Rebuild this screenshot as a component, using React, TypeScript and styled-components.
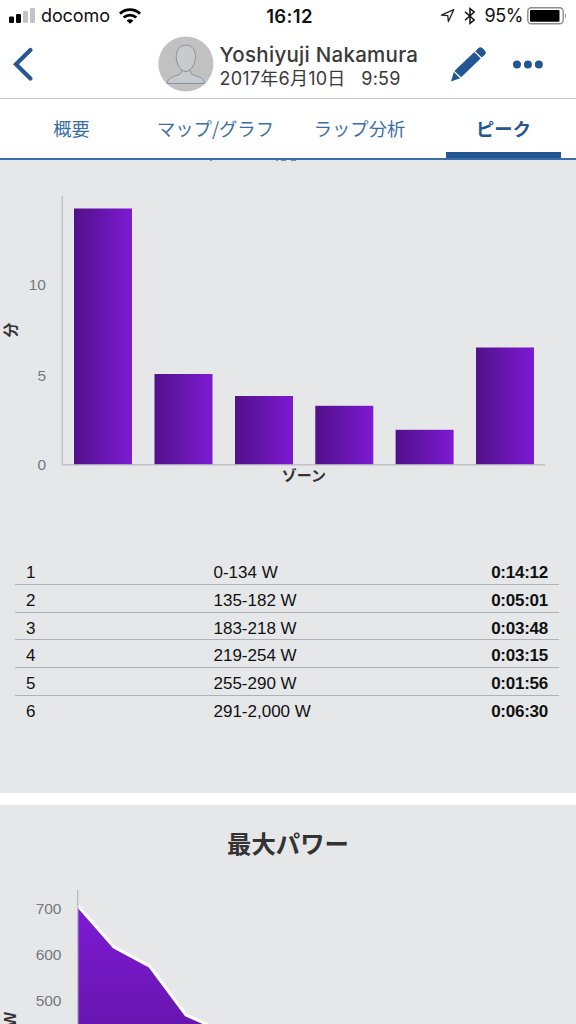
import React from "react";
import styled, { createGlobalStyle } from "styled-components";

const sans = `"Liberation Sans", "Noto Sans CJK JP", sans-serif`;
const ui = `Inter, "Noto Sans CJK JP", sans-serif`;

const GlobalStyle = createGlobalStyle`
  * { box-sizing: border-box; }
  body { margin: 0; background: #fff; overflow: hidden; }
`;

const Screen = styled.div`
  width: 576px;
  height: 1024px;
  overflow: hidden;
  display: flex;
  flex-direction: column;
  background: #fff;
  font-family: ${sans};
`;

const StatusBar = styled.div`
  height: 32px;
  flex: none;
  display: grid;
  grid-template-columns: 1fr auto 1fr;
  align-items: center;
  padding: 0 8px 0 9px;
  font-family: ${ui};
  font-size: 18px;
  line-height: 32px;
  color: #111;
`;

const StatusGroup = styled.div<{ $end?: boolean }>`
  display: flex;
  align-items: center;
  justify-content: ${(p) => (p.$end ? "flex-end" : "flex-start")};
`;

const Carrier = styled.span`
  margin: 0 9px 0 5px;
  letter-spacing: -0.1px;
`;

const Clock = styled.span`
  padding-left: 2px;
  font-size: 18.5px;
  font-weight: 600;
  letter-spacing: 0.35px;
`;

const BluetoothIcon = styled.svg`
  margin-left: 9px;
`;

const BatteryText = styled.span`
  margin: 0 4px 0 8px;
  letter-spacing: -0.4px;
`;

const Header = styled.header`
  height: 67px;
  flex: none;
  display: flex;
  align-items: center;
  border-bottom: 1px solid #c8c8c8;
  padding: 0 32px 2px 12px;
`;

const BackIcon = styled.svg`
  margin-right: 124px;
`;

const Person = styled.div`
  width: 231px;
  margin-left: 6px;
  padding-top: 6px;
  font-family: ${ui};
  color: #3a3a3a;
  white-space: pre;
`;

const Name = styled.div`
  font-size: 20.5px;
  line-height: 24px;
  font-weight: 500;
  letter-spacing: 0.28px;
`;

const DateLine = styled.div`
  font-size: 18px;
  line-height: 24px;
  letter-spacing: 0.22px;
`;

const PencilIcon = styled.svg`
  margin: 0 25px 0 2px;
`;

const Tabs = styled.nav`
  height: 61px;
  flex: none;
  display: flex;
  border-bottom: 2px solid #3a6ea8;
`;

const Tab = styled.div<{ $active?: boolean }>`
  width: 144px;
  padding: 16px 1px 0 0;
  font-size: 18.3px;
  line-height: 27px;
  font-family: "Noto Sans CJK JP", sans-serif;
  font-weight: ${(p) => (p.$active ? 700 : 400)};
  color: ${(p) => (p.$active ? "#235693" : "#3b6ea6")};
  display: flex;
  flex-direction: column;
  justify-content: space-between;
  align-items: center;
`;

const Indicator = styled.div`
  width: 115px;
  height: 6px;
  background: #235693;
`;

const Panel = styled.section<{ $height: number }>`
  height: ${(p) => p.$height}px;
  flex: none;
  overflow: hidden;
  background: #e6e7e9;
  font-family: ${sans};
`;

const Divider = styled.div`
  height: 12px;
  flex: none;
  background: #fff;
`;

const Chart = styled.svg`
  display: block;
  font-family: ${sans};
`;

const ZoneTable = styled.div`
  margin: 57.4px 17px 0 15px;
`;

const ZoneRow = styled.div`
  height: 27.7px;
  display: grid;
  grid-template-columns: 187.5px 1fr auto;
  padding: 5.8px 11px 0;
  font-size: 17px;
  line-height: 20px;
  color: #111;
  border-bottom: 1px solid #b0b1b4;
  &:last-child { border-bottom: none; }
`;

const ZoneTime = styled.span`
  font-weight: 700;
  letter-spacing: -0.25px;
`;

const PanelTitle = styled.h2`
  margin: 0;
  padding-top: 20px;
  text-align: center;
  font-family: "Noto Sans CJK JP", sans-serif;
  font-size: 24.4px;
  line-height: 36px;
  font-weight: 700;
  color: #333;
`;

const bars = [
  { x: 74, top: 208.5 },
  { x: 154.5, top: 374 },
  { x: 235, top: 396 },
  { x: 315.3, top: 405.8 },
  { x: 395.6, top: 429.8 },
  { x: 476, top: 347.5 },
];

const zones = [
  ["1", "0-134 W", "0:14:12"],
  ["2", "135-182 W", "0:05:01"],
  ["3", "183-218 W", "0:03:48"],
  ["4", "219-254 W", "0:03:15"],
  ["5", "255-290 W", "0:01:56"],
  ["6", "291-2,000 W", "0:06:30"],
];

const tabs = ["概要", "マップ/グラフ", "ラップ分析", "ピーク"];

function ZoneChart() {
  return (
    <Chart width="576" height="340" viewBox="0 160 576 340">
      <defs>
        <linearGradient id="bar" x1="0" x2="1" y1="0" y2="0">
          <stop offset="0" stopColor="#511189" />
          <stop offset="1" stopColor="#7d1ad3" />
        </linearGradient>
      </defs>
      {/* lower edge of the heading that has scrolled under the tabs */}
      <path d="M210 160.3h2M276 160.3h2M281 160.3h5M291 160.3h5" stroke="#55585e" strokeWidth="0.8" />
      <path d="M62.3 196V464.7H545" fill="none" stroke="#c1c2c5" strokeWidth="1.4" />
      {bars.map((b) => (
        <rect key={b.x} x={b.x} y={b.top} width="58" height={464.2 - b.top} fill="url(#bar)" />
      ))}
      <g fill="#77787b" fontSize="15.5" textAnchor="end">
        <text x="46" y="290">10</text>
        <text x="46" y="381">5</text>
        <text x="46" y="470">0</text>
      </g>
      <g fill="#333" fontSize="15" fontWeight="700" textAnchor="middle" fontFamily="Noto Sans CJK JP, sans-serif">
        <text x="304" y="481">ゾーン</text>
        <text transform="translate(15.5 330) rotate(-90)">分</text>
      </g>
    </Chart>
  );
}

function PowerChart() {
  return (
    <Chart width="576" height="163" viewBox="0 861 576 163">
      <defs>
        <linearGradient id="area" gradientUnits="userSpaceOnUse" x1="0" x2="0" y1="906" y2="1160">
          <stop offset="0" stopColor="#7d1ad3" />
          <stop offset="1" stopColor="#511189" />
        </linearGradient>
      </defs>
      <path d="M78 906L114 947L150 966.5L186 1015L222 1031V1040H78Z" fill="url(#area)" />
      <path d="M78 906L114 947L150 966.5L186 1015L222 1031" fill="none" stroke="#fff" strokeWidth="3" />
      <path d="M77.7 890V1024" stroke="#bcbdc0" strokeWidth="1.4" />
      <g fill="#77787b" fontSize="15.5" textAnchor="end">
        <text x="61.5" y="913.5">700</text>
        <text x="61.5" y="959.5">600</text>
        <text x="61.5" y="1005.5">500</text>
      </g>
      <text transform="translate(16 1019.5) rotate(-90)" textAnchor="middle" fill="#333" fontSize="16" fontWeight="700">W</text>
    </Chart>
  );
}

export default function App() {
  return (
    <Screen>
      <GlobalStyle />
      <StatusBar>
        <StatusGroup>
          <svg width="27" height="18" viewBox="0 0 27 18">
            <rect x="0" y="9.5" width="5" height="6.5" rx="1.3" fill="#000" />
            <rect x="7" y="7" width="5" height="9" rx="1.3" fill="#000" />
            <rect x="14" y="4" width="5" height="12" rx="1.3" fill="#c3c3c3" />
            <rect x="21" y="1" width="5" height="15" rx="1.3" fill="#c3c3c3" />
          </svg>
          <Carrier>docomo</Carrier>
          <svg width="22" height="16" viewBox="0 0 22 16" fill="none" stroke="#000" strokeWidth="2.8">
            <path d="M1 5.6C6.6 .4 15.4 .4 21 5.6" />
            <path d="M4.7 9.5C8.4 6.2 13.6 6.2 17.3 9.5" />
            <path d="M11 15.8L7.6 12.4C9.5 10.7 12.5 10.7 14.4 12.4Z" fill="#000" stroke="none" />
          </svg>
        </StatusGroup>
        <Clock>16:12</Clock>
        <StatusGroup $end>
          <svg width="15" height="16" viewBox="0 0 15 16">
            <path d="M1.4 7.2L13.8 1.6L8.4 13.6L7.8 7.6Z" fill="none" stroke="#222" strokeWidth="1.3" strokeLinejoin="round" />
          </svg>
          <BluetoothIcon width="12" height="18" viewBox="0 0 12 18">
            <path d="M1 4.7L10.2 13L6 16.4V1.6L10.2 5L1 13.3" fill="none" stroke="#111" strokeWidth="1.5" />
          </BluetoothIcon>
          <BatteryText>95%</BatteryText>
          <svg width="41" height="18" viewBox="0 0 41 18">
            <rect x=".8" y=".8" width="35.4" height="16" rx="3.5" fill="none" stroke="#8c8c8c" strokeWidth="1.4" />
            <rect x="3" y="3" width="29.5" height="11.8" rx="1" fill="#000" />
            <path d="M38 6.2Q40.2 8.8 38 11.4Z" fill="#8c8c8c" />
          </svg>
        </StatusGroup>
      </StatusBar>

      <Header>
        <BackIcon width="22" height="34" viewBox="0 0 22 34">
          <path d="M18.5 3L4 17.3L18.5 31.6" fill="none" stroke="#235693" strokeWidth="4.2" strokeLinecap="round" strokeLinejoin="miter" />
        </BackIcon>
        <svg width="56" height="56" viewBox="0 0 56 56">
          <circle cx="28" cy="28" r="27.7" fill="#c1c1c1" />
          <path d="M28 9C22 9 18.3 14 18.3 20.5C18.3 26 20.6 31 23.7 33.7C23.8 37 22.8 38.2 19.5 39.3C14 41 10 42.6 9.3 47.6H46.7C46 42.6 42 41 36.5 39.3C33.2 38.2 32.2 37 32.3 33.7C35.4 31 37.7 26 37.7 20.5C37.7 14 34 9 28 9Z" fill="#c6cbcf" stroke="#8f9094" strokeWidth="1" />
          <path d="M23.7 33.7Q28 37.5 32.3 33.7" fill="none" stroke="#8f9094" strokeWidth="1" />
        </svg>
        <Person>
          <Name>Yoshiyuji Nakamura</Name>
          <DateLine>2017年6月10日   9:59</DateLine>
        </Person>
        <PencilIcon width="36" height="36" viewBox="0 0 36 36" fill="#235693">
          <path d="M0 35.5L2.8 26L9.2 32.2Z" />
          <path d="M3.4 25L23.4 6L29.8 12.4L10.2 31.4Z" />
          <path d="M24.4 5.1L27.6 2Q29.6 .2 31.5 2L34.2 4.6Q36 6.6 34.2 8.4L30.9 11.5Z" />
        </PencilIcon>
        <svg width="32" height="10" viewBox="0 0 32 10" fill="#235693">
          <circle cx="5" cy="5.6" r="4" />
          <circle cx="16" cy="5.6" r="4" />
          <circle cx="27" cy="5.6" r="4" />
        </svg>
      </Header>

      <Tabs>
        {tabs.map((t, i) => (
          <Tab key={t} $active={i === 3}>
            {t}
            {i === 3 && <Indicator />}
          </Tab>
        ))}
      </Tabs>

      <Panel $height={633}>
        <ZoneChart />
        <ZoneTable>
          {zones.map(([n, range, time]) => (
            <ZoneRow key={n}>
              <span>{n}</span>
              <span>{range}</span>
              <ZoneTime>{time}</ZoneTime>
            </ZoneRow>
          ))}
        </ZoneTable>
      </Panel>
      <Divider />
      <Panel $height={219}>
        <PanelTitle>最大パワー</PanelTitle>
        <PowerChart />
      </Panel>
    </Screen>
  );
}
